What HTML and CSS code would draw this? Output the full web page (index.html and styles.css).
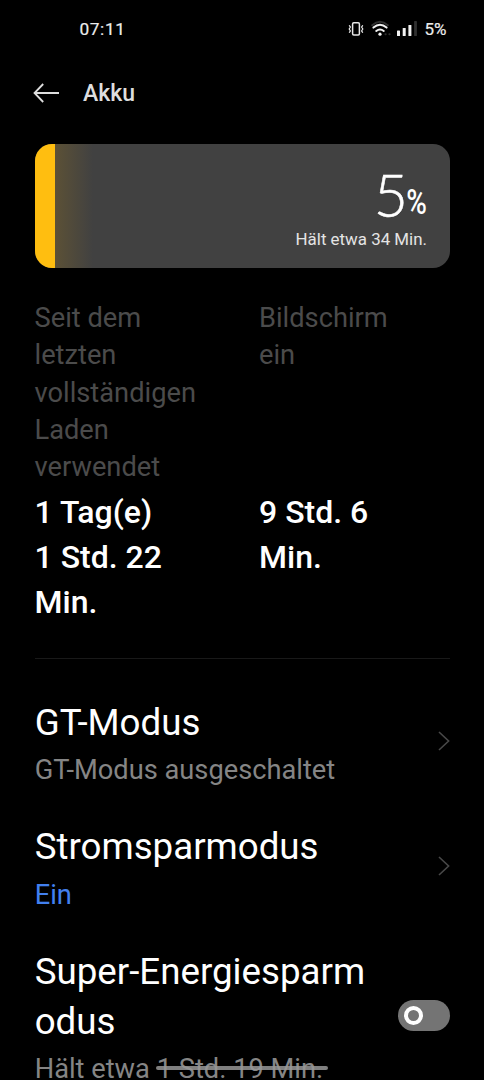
FILE: index.html
```html
<!DOCTYPE html>
<html lang="de">
<head>
<meta charset="utf-8">
<title>Akku</title>
<link rel="stylesheet" href="styles.css">
</head>
<body>
<div class="screen">
  <div class="status">
    <span class="clock">07:11</span>
    <div class="status-icons">
      <svg class="vibrate" width="16" height="16" viewBox="0 0 16 16" fill="none" stroke="#e8e8e8">
        <rect x="4.6" y="1.8" width="6.8" height="12.2" rx="1.2" stroke-width="1.5"/>
        <path d="M1.2 4.2l1.2 1.9-1.2 1.9 1.2 1.9-1.2 1.9M14.8 4.2l-1.2 1.9 1.2 1.9-1.2 1.9 1.2 1.9" stroke-width="1.2"/>
      </svg>
      <svg class="wifi" width="20" height="18" viewBox="0 0 20 18" fill="none" stroke-linecap="round">
        <path d="M1.2 5.2Q9 -1.6 16.8 5.2" stroke="#303030" stroke-width="2"/>
        <path d="M2.4 7.6Q9 2 15.6 7.6M5.2 11Q9 8 12.8 11" stroke="#f2f2f2" stroke-width="2"/>
        <circle cx="9" cy="14.2" r="1.6" fill="#f2f2f2"/>
        <path d="M14.5 14.3h.2M18.4 14.3h.2" stroke="#303030" stroke-width="2"/>
      </svg>
      <svg class="signal" width="21" height="16" viewBox="0 0 21 16">
        <rect x="0" y="9.5" width="3" height="5.5" rx=".6" fill="#f2f2f2"/>
        <rect x="5.7" y="7" width="3" height="8" rx=".6" fill="#f2f2f2"/>
        <rect x="11.4" y="4" width="3" height="11" rx=".6" fill="#f2f2f2"/>
        <rect x="17.1" y="0" width="2.8" height="15" rx=".6" fill="#303030"/>
      </svg>
      <span class="level">5%</span>
    </div>
  </div>

  <header class="header">
    <svg class="back" width="27" height="20" viewBox="0 0 27 20" fill="none" stroke="#dedede" stroke-width="1.8">
      <path d="M26 10H1.6M10.2 1L1.5 10l8.7 9"/>
    </svg>
    <h1 class="title">Akku</h1>
  </header>

  <section class="battery">
    <div class="charge"></div>
    <div class="glow"></div>
    <div class="battery-text">
      <div class="percent"><span class="digit">5</span><span class="sign">%</span></div>
      <div class="remaining">Hält etwa 34 Min.</div>
    </div>
  </section>

  <section class="stats">
    <div class="label">Seit dem<br>letzten<br>vollständigen<br>Laden<br>verwendet</div>
    <div class="label">Bildschirm<br>ein</div>
    <div class="value">1 Tag(e)<br>1 Std. 22<br>Min.</div>
    <div class="value">9 Std. 6<br>Min.</div>
  </section>

  <main class="list">
    <div class="row">
      <div>
        <div class="name">GT-Modus</div>
        <div class="detail">GT-Modus ausgeschaltet</div>
      </div>
      <svg class="chevron" width="12" height="20" viewBox="0 0 12 20" fill="none" stroke="#484848" stroke-width="1.6"><path d="M1 1l9.6 9L1 19"/></svg>
    </div>
    <div class="row">
      <div>
        <div class="name">Stromsparmodus</div>
        <div class="detail on">Ein</div>
      </div>
      <svg class="chevron" width="12" height="20" viewBox="0 0 12 20" fill="none" stroke="#484848" stroke-width="1.6"><path d="M1 1l9.6 9L1 19"/></svg>
    </div>
    <div class="row">
      <div>
        <div class="name">Super-Energiesparm<br>odus</div>
        <div class="detail">Hält etwa 1 Std. 19 Min.</div>
      </div>
      <div class="switch"><div class="knob"></div></div>
    </div>
  </main>
  <div class="gesture-bar"></div>
</div>
</body>
</html>
```
FILE: styles.css
```css
* { box-sizing: border-box; }
body { margin: 0; background: #000; }
.screen {
  position: relative;
  width: 484px;
  height: 1080px;
  overflow: hidden;
  background: #000;
  color: #fff;
  font-family: Roboto, sans-serif;
}
.status {
  display: flex;
  justify-content: space-between;
  align-items: center;
  height: 57px;
  padding: 0 37.5px 0 79.5px;
  color: #ececec;
  font-size: 17.3px;
  font-weight: 400;
  -webkit-text-stroke: .2px #ececec;
}
.clock { letter-spacing: .6px; }
.status-icons { display: flex; align-items: center; }
.vibrate { margin-right: -1px; }
.wifi { margin-left: 8px; }
.signal { margin-left: 6px; }
.level { margin-left: 6px; font-size: 17px; }
.header {
  display: flex;
  align-items: center;
  height: 72px;
  padding-left: 33px;
}
.title {
  margin: 0 0 0 23px;
  font-size: 23px;
  font-weight: 500;
  color: #dedede;
}
.battery {
  display: flex;
  height: 124px;
  margin: 14.6px 34.5px 0;
  border-radius: 17px;
  overflow: hidden;
  background: #414141;
}
.charge { width: 20.5px; background: #ffbe10; }
.glow { width: 38px; background: linear-gradient(90deg, #5c5136, #414141); }
.battery-text {
  flex: 1;
  padding: 24px 22.5px 0 0;
  text-align: right;
}
.percent {
  display: flex;
  justify-content: flex-end;
  height: 59px;
  line-height: 54px;
}
.digit {
  margin-right: -3px;
  font-family: Lato, sans-serif;
  font-weight: 300;
  font-size: 59px;
  -webkit-text-stroke: .5px #fff;
}
.sign {
  width: 22px;
  direction: rtl;
  font-size: 35px;
  font-weight: 500;
  line-height: 69px;
  transform: scaleX(.8);
  transform-origin: right;
}
.remaining { font-size: 16.9px; line-height: 24px; color: #e4e4e4; }
.stats {
  display: grid;
  grid-template-columns: 224.5px 1fr;
  row-gap: 3px;
  height: 391px;
  align-content: start;
  margin: 0 34.5px;
  padding-top: 32.4px;
  border-bottom: 1px solid #191919;
}
.label { font-size: 27.25px; line-height: 37.35px; color: #4b4b4b; }
.value { font-size: 32px; line-height: 45px; font-weight: 500; }
.list {
  display: flex;
  flex-direction: column;
  gap: 32.9px;
  padding: 39.4px 34px 0 34.7px;
}
.row {
  display: flex;
  justify-content: space-between;
  align-items: center;
  white-space: nowrap;
}
.name { font-size: 36.7px; line-height: 50px; }
.detail { margin-top: 4.1px; font-size: 27.25px; line-height: 37.5px; color: #858585; }
.on { color: #4280f0; }
.chevron, .switch { margin-bottom: 5px; }
.switch {
  width: 52px;
  height: 31px;
  padding: 6px;
  border-radius: 16px;
  background: #747474;
}
.knob { width: 19px; height: 19px; border: 4.5px solid #fff; border-radius: 50%; }
.gesture-bar {
  position: absolute;
  left: 156px;
  top: 1066px;
  width: 172px;
  height: 4px;
  border-radius: 2px;
  background: rgba(150, 150, 150, .85);
}
```
